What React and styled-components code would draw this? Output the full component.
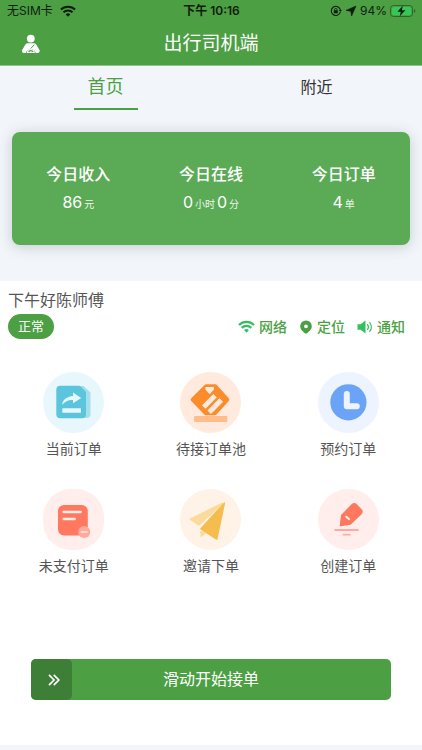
import React, { useState } from "react";
import styled, { createGlobalStyle } from "styled-components";

const GlobalStyle = createGlobalStyle`
  * {
    box-sizing: border-box;
  }
  body {
    margin: 0;
    background: #f2f6fb;
    color: #555;
    font-family: Inter, "Noto Sans CJK SC", sans-serif;
  }
  button {
    border: 0;
    padding: 0;
    background: none;
    color: inherit;
    font-family: inherit;
    cursor: pointer;
  }
  svg {
    display: block;
    flex: none;
  }
`;

const Header = styled.header`
  background: #4c9f43;
  border-bottom: 1px solid #8ec489;
`;

const StatusBar = styled.div`
  display: grid;
  grid-template-columns: 1fr auto 1fr;
  align-items: center;
  height: 22px;
  padding: 0 6px 0 7px;
  color: #101d0e;
  font-size: 12px;
  line-height: 16px;
`;

const StatusGroup = styled.div`
  display: flex;
  align-items: center;
  justify-content: ${(props) => (props.$end ? "flex-end" : "flex-start")};
  gap: ${(props) => (props.$end ? "3px" : "7px")};
`;

const Clock = styled.time`
  font-weight: 600;
`;

const TitleBar = styled.div`
  display: grid;
  grid-template-columns: 40px 1fr 40px;
  align-items: center;
  height: 43px;
  padding: 0 11px;
  color: #fff;
`;

const ProfileButton = styled.button`
  display: flex;
  align-items: center;
  justify-content: center;
  height: 40px;
`;

const Title = styled.h1`
  margin: 0;
  text-align: center;
  font-size: 19px;
  line-height: 28px;
  font-weight: 400;
`;

const Tabs = styled.nav`
  display: grid;
  grid-template-columns: 1fr 1fr;
  justify-items: center;
`;

const Tab = styled.button`
  width: 64px;
  height: 44px;
  border-bottom: 2px solid ${(props) => (props.$active ? "#4c9f43" : "transparent")};
  color: ${(props) => (props.$active ? "#4c9f43" : "#333")};
  font-size: ${(props) => (props.$active ? "18px" : "16px")};
  line-height: 24px;
`;

const Summary = styled.section`
  display: grid;
  grid-template-columns: repeat(3, 1fr);
  margin: 22px 12px 36px;
  padding: 30px 0;
  border-radius: 8px;
  background: #5bab56;
  box-shadow: 0 2px 14px rgba(60, 70, 80, 0.24);
  color: #fff;
  text-align: center;
`;

const StatTitle = styled.h2`
  margin: 0 0 4px;
  font-size: 16px;
  line-height: 24px;
  font-weight: 500;
`;

const StatValue = styled.p`
  display: flex;
  align-items: baseline;
  justify-content: center;
  gap: 2px;
  height: 25px;
  margin: 0;
  font-size: 16px;
  line-height: 24px;
`;

const Unit = styled.small`
  font-size: 10px;
  opacity: 0.9;
`;

const Panel = styled.main`
  padding-bottom: 45px;
  background: #fff;
`;

const Greeting = styled.p`
  margin: 0;
  padding: 7px 8px 2px;
  font-size: 16px;
  line-height: 24px;
`;

const DriverRow = styled.div`
  display: flex;
  align-items: center;
  justify-content: space-between;
  padding: 0 17px 0 8px;
`;

const Badge = styled.span`
  padding: 0 10px;
  border-radius: 13px;
  background: #4c9f43;
  color: #fff;
  font-size: 13px;
  line-height: 25px;
`;

const Checks = styled.div`
  display: flex;
  gap: 12px;
`;

const Check = styled.span`
  display: flex;
  align-items: center;
  gap: 4px;
  color: #4c9f43;
  font-size: 14px;
  line-height: 20px;
  font-weight: 500;
`;

const Menu = styled.div`
  display: grid;
  grid-template-columns: repeat(3, 1fr);
  row-gap: 29px;
  padding: 33px 5px 0;
`;

const MenuItem = styled.button`
  display: flex;
  flex-direction: column;
  align-items: center;
  gap: 5px;
  font-size: 14px;
  line-height: 22px;
`;

const Disc = styled.span`
  width: 61px;
  height: 61px;
  border-radius: ${(props) => (props.$soft ? "28px" : "50%")};
  background: ${(props) => props.$tint};
`;

const SlideTrack = styled.div`
  display: grid;
  grid-template-columns: 41px 1fr 41px;
  margin: 82px 31px 0;
  border-radius: 5px;
  background: #4c9f43;
  color: #fff;
  text-align: center;
  font-size: 16px;
  line-height: 40px;
`;

const SlideHandle = styled.button`
  display: flex;
  align-items: center;
  justify-content: center;
  height: 41px;
  padding-left: 4px;
  border-radius: 5px;
  background: #3d7f37;
`;

function WifiIcon({ width, height, color }) {
  return (
    <svg width={width} height={height} viewBox="0 0 16 12" fill="none" stroke={color} strokeWidth="2.1">
      <path d="M0.9 4.6a10.2 10.2 0 0 1 14.2 0" />
      <path d="M3.5 7.3a6.5 6.5 0 0 1 9 0" />
      <path d="M8 11.8 5.7 9.4a3.4 3.4 0 0 1 4.6 0z" fill={color} stroke="none" />
    </svg>
  );
}

function LockIcon() {
  return (
    <svg width="12" height="12" viewBox="0 0 12 12" fill="none" stroke="#101d0e">
      <path d="M10.3 7.2A4.6 4.6 0 1 1 10.4 5" strokeWidth="1.1" />
      <path d="m8.8 4.9 1.7 2 1.4-2z" fill="#101d0e" stroke="none" />
      <rect x="3.8" y="5.3" width="4" height="3" rx="0.4" fill="#101d0e" stroke="none" />
      <path d="M4.6 5.5V4.6a1.2 1.2 0 0 1 2.4 0v.9" strokeWidth="0.8" />
    </svg>
  );
}

function LocationIcon() {
  return (
    <svg width="12" height="12" viewBox="0 0 12 12">
      <path d="M11 1 6.6 11 5.8 6.2 1 5.4z" fill="#101d0e" stroke="#101d0e" strokeWidth="0.6" strokeLinejoin="round" />
    </svg>
  );
}

function BatteryIcon() {
  return (
    <svg width="26" height="12" viewBox="0 0 26 12">
      <rect x="0.5" y="0.5" width="22" height="11" rx="3" fill="none" stroke="#2d6727" />
      <rect x="2" y="2" width="19" height="8" rx="1.6" fill="#35c759" />
      <path d="M24 4v4q1.3-.6 1.3-2T24 4z" fill="#2d6727" />
      <path d="M12.8.8 7.4 6.7h3.4L9.8 11.2l5.6-6h-3.5z" fill="#101d0e" />
    </svg>
  );
}

function DriverIcon() {
  return (
    <svg width="18" height="20" viewBox="0 0 18 20" fill="#fff">
      <circle cx="8.8" cy="4.6" r="3.9" />
      <path d="M5.8 9.2h6q1.6 0 2.4 1.3l3.1 5.2q1 1.8-.4 2.9-.6.5-1.6.5H2.3q-1 0-1.6-.5-1.400-1.100-.4-2.900l3.100-5.200q.8-1.300 2.400-1.300z" />
      <path d="M3.800 20a5 5 0 0 1 10 0z" fill="#4c9f43" />
      <path d="M4.700 19.100a4.100 4.100 0 0 1 8.200 0z" />
      <path d="M6 18.100a2.900 2.900 0 0 1 5.600 0H10.200q-.3-.8-1.400-.8t-1.400.8z" fill="#4c9f43" />
      <path d="m12.300 10.600-3.600 4" fill="none" stroke="#4c9f43" />
    </svg>
  );
}

function PinIcon() {
  return (
    <svg width="14" height="14" viewBox="0 0 14 14">
      <path
        d="M7 .4a5.8 5.8 0 0 0-5.8 5.800C1.200 9.600 4.500 12.100 7 13.800c2.500-1.700 5.800-4.200 5.800-7.600A5.800 5.800 0 0 0 7 .4zm0 4a1.900 1.900 0 1 1 0 3.800 1.900 1.900 0 0 1 0-3.800z"
        fill="#4c9f43"
        fillRule="evenodd"
      />
    </svg>
  );
}

function SpeakerIcon() {
  return (
    <svg width="16" height="14" viewBox="0 0 16 14" fill="none" stroke="#35c060" strokeWidth="1.2" strokeLinecap="round">
      <path d="M0.500 4.200h3L8.500.5v13L3.500 9.800h-3z" fill="#35c060" stroke="none" />
      <path d="M10.500 4.600a3.800 3.800 0 0 1 0 4.800M12.700 2.600a6.600 6.600 0 0 1 0 8.800" />
    </svg>
  );
}

function CurrentIcon() {
  return (
    <svg viewBox="0 0 61 61">
      <path d="M36 14h4.500l7 6.500V42a4 4 0 0 1-4 4H36z" fill="#a5dfeb" />
      <path d="M17.300 13.700H36q1 0 1.700.7l4.500 4.700q.8.800.8 1.800v21.400a4 4 0 0 1-4 4H17.300a4 4 0 0 1-4-4V17.700a4 4 0 0 1 4-4z" fill="#5bc5de" />
      <path d="M30 20.500 38.200 26 30 31.300v-3.200c-4.500-.3-7.800 1.200-10.900 4.700.5-5 4.500-8.400 10.900-8.900z" fill="#e7f7fc" />
      <rect x="19.300" y="36.300" width="18.700" height="4.500" rx="0.500" fill="#e7f7fc" />
    </svg>
  );
}

function PoolIcon() {
  return (
    <svg viewBox="0 0 61 61">
      <path d="M26 14.300h9.300L47.300 27.700 35 41.200h-9.300L12.700 27.700z" fill="#fb8c2c" stroke="#fb8c2c" strokeWidth="4" strokeLinejoin="round" />
      <path d="M26 15.500h7.300v1.800l-3.600 4L26 17.300z" fill="#ffeadd" stroke="#ffeadd" strokeWidth="1.2" strokeLinejoin="round" />
      <path d="M22.500 33.300 33.300 22.500l3 2.800-10.800 11zM28 38.600 39.400 26.700l3.200 3.100L31 41.500z" fill="#ffeadd" stroke="#ffeadd" strokeWidth="1" strokeLinejoin="round" />
      <rect x="14" y="44" width="33.300" height="6" rx="1" fill="#ffbd8b" />
    </svg>
  );
}

function ReserveIcon() {
  return (
    <svg viewBox="0 0 61 61">
      <circle cx="30.400" cy="30.300" r="18.100" fill="#6ba4f7" />
      <path d="M28.800 22v12.200h10" fill="none" stroke="#edf3ff" strokeWidth="6" strokeLinecap="round" strokeLinejoin="round" />
    </svg>
  );
}

function UnpaidIcon() {
  return (
    <svg viewBox="0 0 61 61" strokeLinecap="round">
      <rect x="15" y="16" width="29.800" height="30.400" rx="6" fill="#ff785f" />
      <path d="M20.500 23h17.300M20.500 30h11.300" stroke="#ffeeeb" strokeWidth="2.300" />
      <circle cx="41.200" cy="43" r="6.100" fill="#ffaa9b" />
      <path d="M38.300 43h5.800" stroke="#ffeeeb" strokeWidth="1.500" />
    </svg>
  );
}

function InviteIcon() {
  return (
    <svg viewBox="0 0 61 61" strokeLinejoin="round" strokeWidth="1.600">
      <path d="M21 42.500l.4 4.600 3.300-2.800z" fill="#fadb9b" stroke="#fadb9b" />
      <path d="M42.500 14.300 10.300 30.200l8.500 5.600z" fill="#fadb9b" stroke="#fadb9b" />
      <path d="M44.300 14.200 36.700 50 21 39.800z" fill="#f5bd4d" stroke="#f5bd4d" />
    </svg>
  );
}

function CreateIcon() {
  return (
    <svg viewBox="0 0 61 61" strokeLinecap="round" strokeLinejoin="round">
      <path d="M22.700 36.300 24 26.500 34.200 16q2-2 4 0l4.500 4.700q2 2 0 4L32.200 34.700z" fill="#ff785f" stroke="#ff785f" strokeWidth="2" />
      <path d="m28.300 27.700 2.800 2.500" stroke="#ffeeeb" strokeWidth="2" />
      <path d="M17.200 41h22.800M25.500 45.700h6.200" stroke="#ffaa9b" strokeWidth="1.800" />
    </svg>
  );
}

const stats = [
  { title: "今日收入", values: [["86", "元"]] },
  { title: "今日在线", values: [["0", "小时"], ["0", "分"]] },
  { title: "今日订单", values: [["4", "单"]] },
];

const menu = [
  { label: "当前订单", tint: "#e7f7fc", icon: <CurrentIcon /> },
  { label: "待接订单池", tint: "#ffeadd", icon: <PoolIcon /> },
  { label: "预约订单", tint: "#edf3ff", icon: <ReserveIcon /> },
  { label: "未支付订单", tint: "#ffeeec", icon: <UnpaidIcon />, soft: true },
  { label: "邀请下单", tint: "#fff2e7", icon: <InviteIcon /> },
  { label: "创建订单", tint: "#ffeeec", icon: <CreateIcon /> },
];

function App() {
  const [tab, setTab] = useState("首页");

  return (
    <>
      <GlobalStyle />
      <Header>
        <StatusBar>
          <StatusGroup>
            <span>无SIM卡</span>
            <WifiIcon width="16" height="12" color="#101d0e" />
          </StatusGroup>
          <Clock>下午 10:16</Clock>
          <StatusGroup $end>
            <LockIcon />
            <LocationIcon />
            <span>94%</span>
            <BatteryIcon />
          </StatusGroup>
        </StatusBar>
        <TitleBar>
          <ProfileButton aria-label="个人中心">
            <DriverIcon />
          </ProfileButton>
          <Title>出行司机端</Title>
        </TitleBar>
      </Header>
      <Tabs>
        {["首页", "附近"].map((name) => (
          <Tab key={name} $active={tab === name} onClick={() => setTab(name)}>
            {name}
          </Tab>
        ))}
      </Tabs>
      <Summary>
        {stats.map((stat) => (
          <div key={stat.title}>
            <StatTitle>{stat.title}</StatTitle>
            <StatValue>
              {stat.values.map(([value, unit]) => (
                <React.Fragment key={unit}>
                  <span>{value}</span>
                  <Unit>{unit}</Unit>
                </React.Fragment>
              ))}
            </StatValue>
          </div>
        ))}
      </Summary>
      <Panel>
        <Greeting>下午好陈师傅</Greeting>
        <DriverRow>
          <Badge>正常</Badge>
          <Checks>
            <Check>
              <WifiIcon width="17" height="13" color="#35c060" />
              网络
            </Check>
            <Check>
              <PinIcon />
              定位
            </Check>
            <Check>
              <SpeakerIcon />
              通知
            </Check>
          </Checks>
        </DriverRow>
        <Menu>
          {menu.map((item) => (
            <MenuItem key={item.label}>
              <Disc $tint={item.tint} $soft={item.soft}>
                {item.icon}
              </Disc>
              {item.label}
            </MenuItem>
          ))}
        </Menu>
        <SlideTrack>
          <SlideHandle aria-label="开始接单">
            <svg width="12" height="12" viewBox="0 0 12 12" fill="none" stroke="#fff" strokeWidth="1.7">
              <path d="m1 .8 5 5.200-5 5.200M5.800.8l5 5.200-5 5.200" />
            </svg>
          </SlideHandle>
          <span>滑动开始接单</span>
        </SlideTrack>
      </Panel>
    </>
  );
}

export default App;
